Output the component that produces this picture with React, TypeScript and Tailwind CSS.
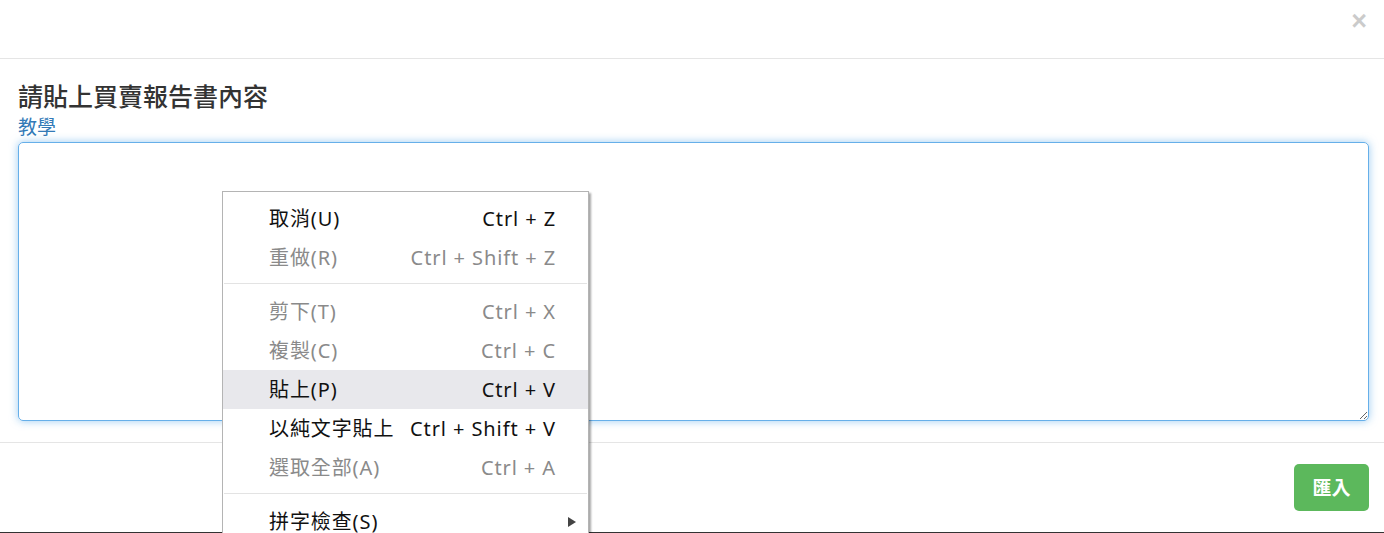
const MENU = [
  { label: "取消(U)", keys: "Ctrl + Z", enabled: true },
  { label: "重做(R)", keys: "Ctrl + Shift + Z", enabled: false },
  "sep",
  { label: "剪下(T)", keys: "Ctrl + X", enabled: false },
  { label: "複製(C)", keys: "Ctrl + C", enabled: false },
  { label: "貼上(P)", keys: "Ctrl + V", enabled: true, hover: true },
  { label: "以純文字貼上", keys: "Ctrl + Shift + V", enabled: true },
  { label: "選取全部(A)", keys: "Ctrl + A", enabled: false },
  "sep",
  { label: "拼字檢查(S)", keys: "", enabled: true, sub: true },
] as const;

function ContextMenu() {
  return (
    <div className="absolute left-[222px] top-[191px] w-[367px] h-[360px] border border-[#b4b4b4] bg-white pt-[7px] shadow-[2px_2px_2px_rgba(0,0,0,0.35)] font-['Noto_Sans','Noto_Sans_CJK_TC',sans-serif] text-[20px] tracking-[0.9px]">
      {MENU.map((item, i) =>
        item === "sep" ? (
          <div key={i} className="mx-[1px] mt-[6px] mb-[8px] h-px bg-[#e3e3e3]" />
        ) : (
          <div
            key={i}
            className={`flex h-[39px] items-center justify-between pl-[46px] pr-[33px] ${
              "hover" in item && item.hover ? "bg-[#e8e8ec]" : ""
            } ${item.enabled ? "text-[#111]" : "text-[#8a8a8a]"}`}
          >
            <span>{item.label}</span>
            {"sub" in item && item.sub ? (
              <svg width="10" height="12" viewBox="0 0 10 12" className="-mr-[22px]">
                <path d="M1 1 L9 6 L1 11 Z" fill="#444" />
              </svg>
            ) : (
              <span className="-mr-[1px]">{item.keys}</span>
            )}
          </div>
        )
      )}
    </div>
  );
}

export default function App() {
  return (
    <div className="relative h-[533px] w-full overflow-hidden bg-white font-['Noto_Sans_CJK_TC','Noto_Sans',sans-serif] text-[#333]">
      <div className="flex h-[59px] justify-end border-b border-[#e5e5e5] pr-[17px] pt-[4px]">
        <span className="font-['Liberation_Sans',sans-serif] text-[27px] font-bold leading-[34px] text-black opacity-20">×</span>
      </div>
      <div className="h-[383px] pl-[18px] pr-[15px] pt-[20px]">
        <h3 className="text-[25px] font-medium leading-[32px] text-[#333]">請貼上買賣報告書內容</h3>
        <a className="mt-[4px] block text-[19px] leading-[22px] text-[#337ab7]">教學</a>
        <textarea className="mt-[5px] block h-[279px] w-full rounded-[5px] border border-[#66afe9] shadow-[0_0_9px_rgba(102,175,233,0.65)] outline-none" />
      </div>
      <div className="flex h-[90px] justify-end border-t border-[#e5e5e5] px-[15px] pt-[21px]">
        <button className="h-[47px] w-[75px] rounded-[5px] bg-[#5cb85c] text-[19px] font-bold text-white">匯入</button>
      </div>
      <div className="h-px bg-[#333]" />
      <ContextMenu />
    </div>
  );
}
